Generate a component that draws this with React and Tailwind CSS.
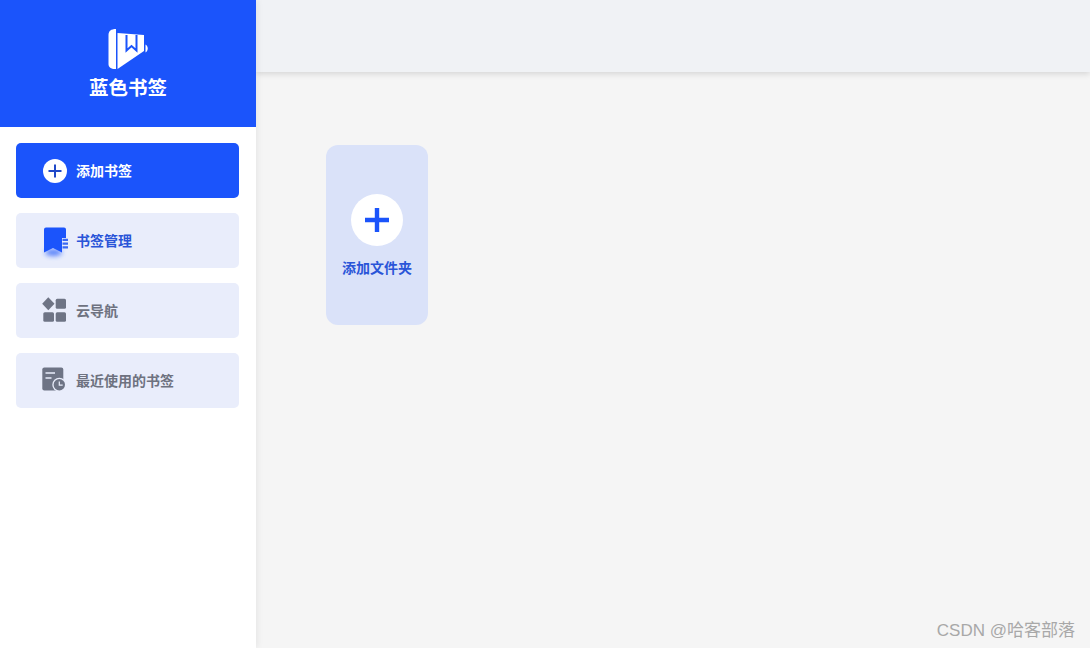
const font = { fontFamily: '"Microsoft YaHei", "Noto Sans CJK SC", "Noto Sans", sans-serif' };

function Logo() {
  return (
    <svg width="42" height="42" viewBox="0 0 42 42" className="block">
      <path d="M1.5 7 C1.5 3 4 1 9 1 V41 H8 C4 41 1.5 39.5 1.5 36 Z" fill="#fff" />
      <path d="M10.5 5 L37 7 V23 L10.5 41 Z" fill="#fff" />
      <path d="M19.5 7 V22.5 L24.5 18 L29.5 22.5 V7" fill="none" stroke="#1b54fb" strokeWidth="2" />
      <path d="M38.5 16.5 C41.5 18.5 41.5 22.5 38.5 24.5 Z" fill="#fff" />
    </svg>
  );
}

function PlusCircle() {
  return (
    <svg width="24" height="24" viewBox="0 0 24 24" className="block">
      <circle cx="12" cy="12" r="12" fill="#fff" />
      <path d="M12 5.5 V18.5 M5.5 12 H18.5" stroke="#2049c8" strokeWidth="2" />
    </svg>
  );
}

function BookmarkIcon() {
  return (
    <svg width="28" height="34" viewBox="0 0 28 34" className="block overflow-visible">
      <defs>
        <filter id="bm" x="-60%" y="-80%" width="220%" height="260%">
          <feGaussianBlur stdDeviation="2.4" />
        </filter>
      </defs>
      <ellipse cx="12.5" cy="28.5" rx="8.5" ry="3.5" fill="#1b54fb" opacity="0.7" filter="url(#bm)" />
      <path d="M3 5.5 Q3 3.5 5 3.5 H23 Q25 3.5 25 5.5 V14 H21 V28.5 L12 24 L3 28.5 Z" fill="#1b54fb" />
      <path d="M21.5 14.8 H27 V17 H21.5 Z M21.5 18.5 H27 V20.7 H21.5 Z M21.5 22.2 H27 V24.4 H21.5 Z" fill="#3a68f2" />
    </svg>
  );
}

function GridIcon() {
  return (
    <svg width="26" height="26" viewBox="0 0 26 26" className="block overflow-visible">
      <path d="M6.3 -0.8 L12.5 5.7 L6.3 12.2 L0.2 5.7 Z" fill="#6e7485" />
      <rect x="13.7" y="0.8" width="10.3" height="10" rx="1.5" fill="#6e7485" />
      <rect x="1.3" y="14.2" width="10.7" height="9.5" rx="1.5" fill="#6e7485" />
      <rect x="13.7" y="14.2" width="10.3" height="9.5" rx="1.5" fill="#6e7485" />
    </svg>
  );
}

function RecentIcon() {
  return (
    <svg width="26" height="26" viewBox="0 0 26 26" className="block overflow-visible">
      <rect x="0.3" y="-0.5" width="21" height="23" rx="2" fill="#6e7485" />
      <path d="M3.5 5 H13 M3.5 10 H9.5" stroke="#e9edfb" strokeWidth="1.7" />
      <circle cx="17.3" cy="16.8" r="7" fill="#e9edfb" />
      <circle cx="17.3" cy="16.8" r="5.7" fill="#6e7485" />
      <path d="M17.3 13.5 V17.2 H20.7" fill="none" stroke="#e9edfb" strokeWidth="1.2" />
    </svg>
  );
}

function NavItem({ icon, label, className }) {
  return (
    <div className={`flex items-center h-[55px] rounded-[5px] ${className}`}>
      <div className="flex items-center justify-center w-[26px] h-[34px] ml-[26px] mr-[8px]">{icon}</div>
      <span className="text-[14px] font-bold leading-none pb-[2px]">{label}</span>
    </div>
  );
}

export default function App() {
  return (
    <div className="flex w-[1090px] h-[648px] overflow-hidden bg-[#f5f5f5]" style={font}>
      <aside className="relative z-20 flex flex-col w-[256px] h-full bg-white shadow-[2px_0_6px_rgba(0,0,0,0.06)]">
        <div className="flex flex-col items-center h-[127px] pt-[28px] bg-[#1b54fb]">
          <Logo />
          <div className="mt-[4px] text-[19.5px] leading-[25px] font-bold text-white">蓝色书签</div>
        </div>
        <nav className="flex flex-col gap-[15px] pt-[16px] pl-[16px] pr-[17px]">
          <NavItem icon={<PlusCircle />} label="添加书签" className="bg-[#1b54fb] text-white" />
          <NavItem icon={<BookmarkIcon />} label="书签管理" className="bg-[#e9edfb] text-[#2a55d8]" />
          <NavItem icon={<GridIcon />} label="云导航" className="bg-[#e9edfb] text-[#6e7280]" />
          <NavItem icon={<RecentIcon />} label="最近使用的书签" className="bg-[#e9edfb] text-[#6e7280]" />
        </nav>
      </aside>
      <main className="relative flex-1 flex flex-col">
        <header className="h-[72px] bg-[#f0f2f5] shadow-[0_2px_6px_rgba(0,0,0,0.13)]" />
        <div className="pt-[73px] pl-[70px]">
          <div className="flex flex-col items-center w-[102px] h-[180px] pt-[49px] rounded-[12px] bg-[#dae2f9]">
            <div className="flex items-center justify-center w-[52px] h-[52px] rounded-full bg-white">
              <svg width="26" height="26" viewBox="0 0 26 26" className="block">
                <path d="M13 1 V25 M1 13 H25" stroke="#1b54fb" strokeWidth="4.4" />
              </svg>
            </div>
            <div className="mt-[12px] text-[14px] leading-[18px] font-bold text-[#2a55d8]">添加文件夹</div>
          </div>
        </div>
        <div
          className="absolute right-[15px] bottom-[5px] text-[17px] leading-[24px] text-[#a8a8a8]"
          style={{ fontFamily: '"Liberation Sans", "Noto Sans CJK SC", sans-serif' }}
        >
          CSDN @哈客部落
        </div>
      </main>
    </div>
  );
}
